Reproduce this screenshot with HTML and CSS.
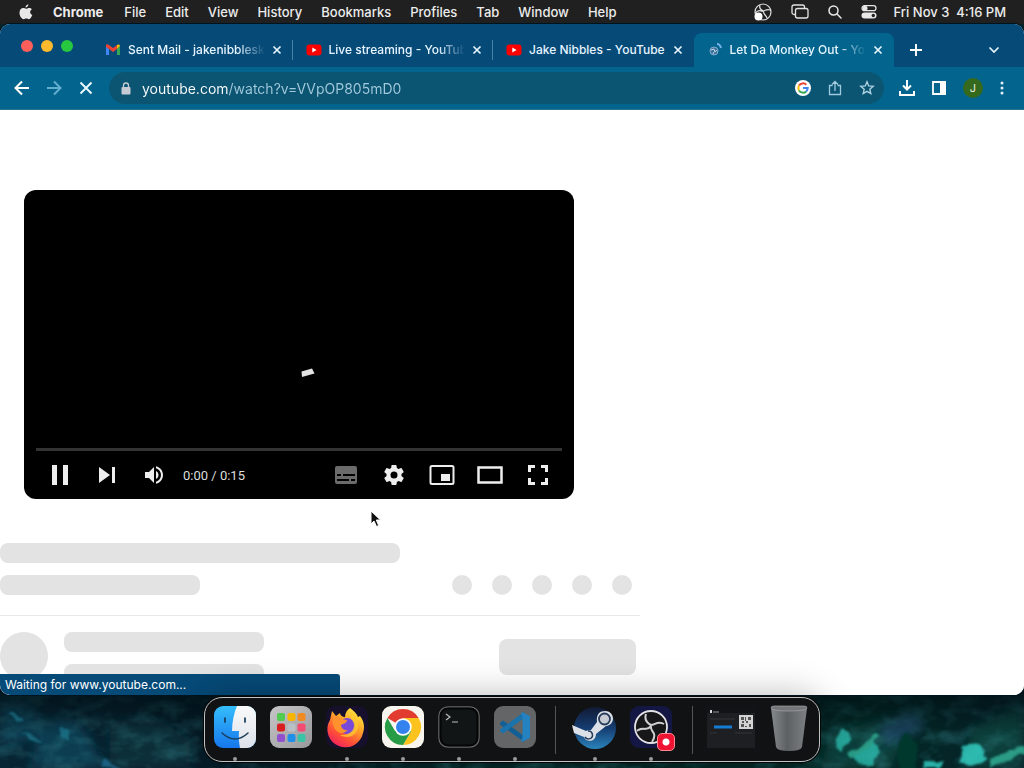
FILE: index.html
```html
<!DOCTYPE html>
<html lang="en">
<head>
<meta charset="utf-8">
<title>Let Da Monkey Out - YouTube</title>
<link rel="stylesheet" href="styles.css">
</head>
<body>
<div class="desktop">
  <svg class="wallpaper" viewBox="0 0 1024 80" preserveAspectRatio="none" aria-hidden="true">
    <defs>
      <linearGradient id="sea" x1="0" x2="1"><stop offset="0" stop-color="#082838"/><stop offset=".2" stop-color="#061f2b"/><stop offset=".5" stop-color="#042a28"/><stop offset=".85" stop-color="#032b26"/><stop offset="1" stop-color="#06242c"/></linearGradient>
      <linearGradient id="deep" x2="0" y2="1"><stop offset="0" stop-color="#000d12" stop-opacity=".8"/><stop offset=".6" stop-color="#000d12" stop-opacity=".1"/></linearGradient>
      <filter id="soft" x="-20%" y="-50%" width="140%" height="200%"><feGaussianBlur stdDeviation="5"/></filter>
      <filter id="coral" x="0" y="0" width="100%" height="100%"><feTurbulence type="fractalNoise" baseFrequency=".045 .07" numOctaves="3" seed="8"/><feColorMatrix values="0 0 0 0 .05  0 0 0 0 .32  0 0 0 0 .36  2.4 0 0 0 -1"/></filter>
      <filter id="rough" x="-10%" y="-30%" width="120%" height="160%"><feTurbulence type="fractalNoise" baseFrequency=".09" numOctaves="2" seed="3"/><feDisplacementMap in="SourceGraphic" scale="8" xChannelSelector="R" yChannelSelector="G"/><feGaussianBlur stdDeviation="1"/></filter>
    </defs>
    <rect width="1024" height="80" fill="url(#sea)"/>
    <g filter="url(#soft)">
      <path d="M0 15q25-8 38 12t-8 25-30 5zM40 40q25-24 45 2l20 38H30z" fill="#0f4358"/>
      <path d="M110 35q50-15 80 20v25h-80z" fill="#0a333c"/>
      <path d="M830 45l55-15 20 22-15 28h-70zM970 40l54-25v65h-60z" fill="#07443f"/>
      <path d="M880 38l35-16 10 18-40 18z" fill="#1b4a65"/>
    </g>
    <rect width="1024" height="80" filter="url(#coral)" opacity=".35"/>
    <rect width="1024" height="80" fill="url(#deep)"/>
    <g filter="url(#rough)">
      <path d="M60 40l12 2-5 10-8-3zM6 26q12-4 18 8M20 46q18-3 23 10" fill="#1f7f95" opacity=".65"/>
      <path d="M104 70l17 10h-20z" fill="#24719b" opacity=".7"/>
      <path d="M840 42q10-2 10 10l-9 12-5-5zM854 65l18-12 8 10-8 15-14-2z" fill="#2dbcae" opacity=".8"/>
      <path d="M848 66l30-20 3 3-29 21zM990 72l34-15v8l-34 14z" fill="#2c9b85"/>
      <path d="M960 58l20-2 7 15-15 7-14-4 4-8zM925 72l18 1-4 7h-16z" fill="#35d4c8" opacity=".8"/>
      <ellipse cx="907" cy="65" rx="10" ry="19" fill="#06372e"/>
    </g>
  </svg>

  <header class="menubar">
    <button class="apple" aria-label="Apple menu"><svg width="14" height="16" viewBox="0 0 14 16" fill="#e8e8e8"><path d="M9.400.3c.1 1.900-1.400 3.300-2.800 3.300C6.400 1.900 7.800.6 9.400.3zM12.900 5.300c-2.600 1.500-2.100 4.700.4 5.700-.6 1.700-2 4.200-3.400 4.200-1.100 0-1.400-.7-2.600-.7s-1.600.7-2.600.7C2.500 15.200.3 11.400.5 8.500c.2-3 2-4.400 3.700-4.400 1.200 0 2 .7 2.900.7s1.700-.8 3.200-.8c1 0 2 .5 2.600 1.300z"/></svg></button>
    <nav class="menus">
      <button class="app-name">Chrome</button><button>File</button><button>Edit</button><button>View</button><button>History</button><button>Bookmarks</button><button>Profiles</button><button>Tab</button><button>Window</button><button>Help</button>
    </nav>
    <div class="status-icons">
      <button aria-label="OBS"><svg width="18" height="18" viewBox="0 0 18 18" fill="none" stroke="#e2e2e2"><circle cx="9" cy="9" r="8" stroke-width="1.200"/><path d="M6 2c-1 3 1 5 3.500 6M9.500 8c2-.5 4-2.500 6.500-1M9.500 8C9 11 12 12 13 15M9 8.500C6 7 3 7.500 1.500 10" stroke-width="1.200"/><circle cx="4.500" cy="13.500" r="4" fill="#fff" stroke="none"/></svg></button>
      <button aria-label="Windows"><svg width="18" height="16" viewBox="0 0 18 16" fill="none" stroke="#e2e2e2" stroke-width="1.300"><path d="M4 10.500H3a2 2 0 0 1-2-2V3a2 2 0 0 1 2-2h8.500a2 2 0 0 1 2 2v1"/><rect x="4.500" y="4.500" width="12.500" height="9.500" rx="2"/></svg></button>
      <button aria-label="Search"><svg width="14" height="14" viewBox="0 0 14 14" fill="none" stroke="#e8e8e8" stroke-width="1.500"><circle cx="5.500" cy="5.500" r="4.500"/><path d="M9 9l4 4" stroke-linecap="round"/></svg></button>
      <button aria-label="Control Center"><svg width="16" height="14" viewBox="0 0 16 14"><rect x="1" y=".7" width="14" height="5" rx="2.500" fill="none" stroke="#e8e8e8" stroke-width="1.200"/><circle cx="4" cy="3.200" r="2.500" fill="#e8e8e8"/><rect x=".5" y="7.500" width="15" height="6" rx="3" fill="#e8e8e8"/><circle cx="12.300" cy="10.500" r="1.700" fill="#222"/></svg></button>
    </div>
    <time class="clock">Fri Nov 3&nbsp; 4:16 PM</time>
  </header>

  <main class="window">
    <div class="tabstrip">
      <div class="lights"><button class="light red" aria-label="Close"></button><button class="light yellow" aria-label="Minimize"></button><button class="light green" aria-label="Zoom"></button></div>
      <div class="tabs">
        <div class="tab">
          <svg class="favicon" viewBox="0 0 16 16"><path d="M1 4v9h3V7z" fill="#4285f4"/><path d="M12 7v6h3V4z" fill="#34a853"/><path d="M1 3.500C1 2 3 2 4 3l4 3 4-3v4l-4 3-4-3-3-2z" fill="#ea4335"/><path d="M12 3c1-1 3-.8 3 1l-3 3z" fill="#fbbc04"/></svg>
          <span class="tab-title fade">Sent Mail - jakenibblesk</span><button class="close" aria-label="Close tab"><svg viewBox="0 0 10 10"><path d="M1.500 1.500l7 7m0-7l-7 7"/></svg></button>
        </div>
        <div class="tab">
          <svg class="favicon" viewBox="0 0 16 16"><rect x=".5" y="2.500" width="15" height="11" rx="3" fill="#f00"/><path d="M6.300 5.500v5l4.300-2.500z" fill="#fff"/></svg>
          <span class="tab-title fade">Live streaming - YouTub</span><button class="close" aria-label="Close tab"><svg viewBox="0 0 10 10"><path d="M1.500 1.500l7 7m0-7l-7 7"/></svg></button>
        </div>
        <div class="tab">
          <svg class="favicon" viewBox="0 0 16 16"><rect x=".5" y="2.500" width="15" height="11" rx="3" fill="#f00"/><path d="M6.300 5.500v5l4.300-2.500z" fill="#fff"/></svg>
          <span class="tab-title">Jake Nibbles - YouTube</span><button class="close" aria-label="Close tab"><svg viewBox="0 0 10 10"><path d="M1.500 1.500l7 7m0-7l-7 7"/></svg></button>
        </div>
        <div class="tab active">
          <svg class="favicon" viewBox="0 0 16 16" fill="none"><circle cx="7" cy="9" r="4" fill="#3b6f9b" stroke="#82add0"/><path d="M4 8l3-1 1 3 2-2M6 12l1-2" stroke="#c5d8e7"/><path d="M10 2q3 0 4 4" stroke="#74b2ed" stroke-width="2"/></svg>
          <span class="tab-title fade">Let Da Monkey Out - Yo</span><button class="close" aria-label="Close tab"><svg viewBox="0 0 10 10"><path d="M1.500 1.500l7 7m0-7l-7 7"/></svg></button>
        </div>
      </div>
      <button class="new-tab" aria-label="New tab"><svg width="14" height="14" viewBox="0 0 14 14"><path d="M7 1v12M1 7h12" stroke="#fff" stroke-width="1.900"/></svg></button>
      <button class="tab-search" aria-label="Search tabs"><svg width="12" height="8" viewBox="0 0 12 8"><path d="M1.500 1.500L6 6l4.500-4.500" fill="none" stroke="#e5f4fb" stroke-width="1.700"/></svg></button>
    </div>

    <div class="toolbar">
      <div class="nav-buttons">
        <button aria-label="Back"><svg width="16" height="16" viewBox="0 0 16 16" stroke="#fff"><path d="M15 8H2M8 1.500L1.500 8 8 14.500"/></svg></button>
        <button aria-label="Forward"><svg width="16" height="16" viewBox="0 0 16 16" stroke="#62add0"><path d="M1 8h13M8 1.500L14.500 8 8 14.500"/></svg></button>
        <button aria-label="Stop"><svg width="16" height="16" viewBox="0 0 16 16" stroke="#e9f7ff"><path d="M2.500 2.500l11 11m0-11l-11 11"/></svg></button>
      </div>
      <div class="omnibox">
        <svg width="10" height="13" viewBox="0 0 10 13"><rect x=".5" y="5" width="9" height="7.500" rx="1" fill="#c6ccd4"/><path d="M2.500 5V3.500a2.500 2.500 0 0 1 5 0V5" fill="none" stroke="#c6ccd4" stroke-width="1.300"/></svg>
        <input class="url" aria-label="Address" value="youtube.com/watch?v=VVpOP805mD0">
        <div class="omni-actions">
          <button aria-label="Search with Google"><svg width="16" height="16" viewBox="0 0 16 16"><circle cx="8" cy="8" r="8" fill="#fff"/><g fill="none" stroke-width="2"><path d="M11.300 4.700A4.700 4.700 0 0 0 4 5.600" stroke="#ea4335"/><path d="M4 5.600a4.700 4.700 0 0 0 0 4.800" stroke="#fbbc05"/><path d="M4 10.400a4.700 4.700 0 0 0 7.200 1" stroke="#34a853"/><path d="M11.200 11.400a4.700 4.700 0 0 0 1.500-3.300H8" stroke="#4285f4"/></g></svg></button>
          <button aria-label="Share"><svg width="14" height="16" viewBox="0 0 14 16" fill="none" stroke="#9fc9dd" stroke-width="1.300"><path d="M4.500 5.500h-3v9h11v-9h-3M7 11V2M4 4.500l3-3 3 3"/></svg></button>
          <button aria-label="Bookmark"><svg width="16" height="16" viewBox="0 0 16 16" fill="none" stroke="#acd0e0" stroke-width="1.400"><path d="M8 1.800l1.700 4.100 4.500.4-3.400 2.900 1 4.400L8 11.300l-3.800 2.300 1-4.400-3.400-2.900 4.500-.4z"/></svg></button>
        </div>
      </div>
      <div class="tools">
        <button aria-label="Downloads"><svg width="16" height="16" viewBox="0 0 16 16" fill="none" stroke="#fff" stroke-width="2"><path d="M8 0v9M4 5.500l4 4 4-4M1 11v4h14v-4"/></svg></button>
        <button aria-label="Side panel"><svg width="14" height="14" viewBox="0 0 14 14"><path d="M1 1h12v12H1z" fill="none" stroke="#fff" stroke-width="1.800"/><path d="M8 0h6v14H8z" fill="#fff"/></svg></button>
        <button class="profile" aria-label="Profile">J</button>
        <button aria-label="More"><svg width="4" height="14" viewBox="0 0 4 14" fill="#e4f2f8"><circle cx="2" cy="2" r="1.500"/><circle cx="2" cy="7" r="1.500"/><circle cx="2" cy="12" r="1.500"/></svg></button>
      </div>
    </div>

    <section class="page">
      <div class="player">
        <div class="screen"><svg class="spinner" width="14" height="10" viewBox="0 0 14 10"><path d="M.5 3.500L11 .5 13.500 5.500 1 9z" fill="#e3e3e3"/></svg></div>
        <div class="progress"></div>
        <div class="controls">
          <button aria-label="Pause"><svg width="24" height="24" viewBox="0 0 24 24"><path d="M4 2h5v20H4zM15 2h5v20h-5z"/></svg></button>
          <button aria-label="Next"><svg width="24" height="24" viewBox="0 0 24 24"><path d="M4 4l11 8-11 8zM17 4h3v16h-3z"/></svg></button>
          <button aria-label="Mute"><svg width="24" height="24" viewBox="0 0 24 24"><path d="M3 9v6h4l5 5V4L7 9zM16.500 12c0-1.800-1-3.300-2.500-4v8c1.500-.7 2.500-2.200 2.500-4zM14 3.200v2.100c2.900.9 5 3.500 5 6.700s-2.100 5.800-5 6.700v2.100c4-.9 7-4.500 7-8.800s-3-7.900-7-8.800z"/></svg></button>
          <span class="time">0:00 / 0:15</span>
          <div class="right-controls">
            <button class="dim" aria-label="Subtitles"><svg width="24" height="24" viewBox="0 0 24 24"><path fill-rule="evenodd" d="M3 3h18q2 0 2 2v14q0 2-2 2H3q-2 0-2-2V5q0-2 2-2zM3 11v2h4v-2zM9 11v2h12v-2zM3 16v2h12v-2zM17 16v2h4v-2z"/></svg></button>
            <button aria-label="Settings"><svg width="24" height="24" viewBox="0 0 24 24"><path d="M19.430 12.980c.04-.32.070-.640.070-.980s-.03-.66-.07-.98l2.110-1.650c.19-.15.240-.42.120-.64l-2-3.460c-.12-.22-.39-.3-.61-.22l-2.490 1c-.52-.4-1.080-.73-1.690-.98l-.38-2.650A.49.490 0 0 0 14 2h-4c-.25 0-.46.180-.49.420l-.38 2.650c-.61.250-1.170.590-1.690.98l-2.490-1c-.23-.09-.49 0-.61.220l-2 3.460c-.13.220-.07.490.120.640l2.110 1.650c-.04.320-.07.650-.07.980s.03.660.070.980l-2.110 1.650c-.19.150-.24.420-.12.640l2 3.460c.12.220.39.300.61.220l2.490-1c.52.400 1.080.730 1.690.98l.38 2.650c.03.240.240.420.490.420h4c.25 0 .46-.18.490-.42l.38-2.650c.61-.25 1.170-.59 1.690-.98l2.490 1c.23.090.490 0 .61-.22l2-3.460c.12-.22.070-.49-.12-.64zM12 15.500a3.500 3.500 0 1 1 0-7 3.500 3.500 0 0 1 0 7z"/></svg></button>
            <button aria-label="Miniplayer"><svg width="26" height="24" viewBox="0 0 26 24"><rect x="1.500" y="3" width="23" height="18" rx="1.500" fill="none" stroke="#eee" stroke-width="2"/><path d="M12 11h9v7h-9z"/></svg></button>
            <button aria-label="Theater mode"><svg width="26" height="24" viewBox="0 0 26 24"><path d="M1.500 4.500h23v15h-23z" fill="none" stroke="#eee" stroke-width="2.500"/></svg></button>
            <button aria-label="Full screen"><svg width="24" height="24" viewBox="0 0 24 24"><path d="M9 3.500H3.500V9M15 3.500h5.500V9M9 20.500H3.500V15M15 20.500h5.500V15" fill="none" stroke="#eee" stroke-width="3"/></svg></button>
          </div>
        </div>
      </div>
      <div class="skeleton">
        <div class="bone title"></div>
        <div class="meta"><div class="bone short"></div><div class="dots"><i></i><i></i><i></i><i></i><i></i></div></div>
        <div class="owner"><div class="avatar"></div><div class="lines"><div class="bone short"></div><div class="bone short"></div></div><div class="subscribe"></div></div>
      </div>
      <svg class="cursor" width="12" height="18" viewBox="0 0 12 18"><path d="M1 1v13l3-3 2.500 5.500 2.200-1L6.300 10h4.200z" fill="#111" stroke="#fff"/></svg>
      <div class="loading">Waiting for www.youtube.com...</div>
    </section>
  </main>

  <footer class="dock-area">
    <nav class="dock">
      <button class="app running" aria-label="Finder"><svg viewBox="0 0 42 42"><defs><linearGradient id="fb" x2="0" y2="1"><stop stop-color="#35bdfb"/><stop offset="1" stop-color="#1677ec"/></linearGradient><linearGradient id="fw" x2="0" y2="1"><stop stop-color="#fafafa"/><stop offset="1" stop-color="#dce1ea"/></linearGradient></defs><rect width="42" height="42" rx="9" fill="url(#fb)"/><path d="M23 0h10a9 9 0 0 1 9 9v24a9 9 0 0 1-9 9h-7c-1-5-1.500-11-1-17h-7c0-9 2-18 5-25z" fill="url(#fw)"/><path d="M11 12v4M31 12v4" stroke="#183956" stroke-width="1.700" stroke-linecap="round"/><path d="M8 27q13 12 26 0" fill="none" stroke="#1c3f5e" stroke-width="1.500" stroke-linecap="round"/></svg></button>
      <button class="app" aria-label="Launchpad"><svg viewBox="0 0 42 42"><defs><linearGradient id="lp" x2="1" y2="1"><stop stop-color="#c6c6c8"/><stop offset="1" stop-color="#989799"/></linearGradient></defs><rect width="42" height="42" rx="9" fill="url(#lp)"/><rect x="7" y="7" width="8" height="8" rx="2" fill="#52cc50"/><rect x="17.500" y="7" width="8" height="8" rx="2" fill="#f7b500"/><rect x="27.500" y="7" width="8" height="8" rx="2" fill="#f08a22"/><rect x="7" y="17.500" width="8" height="8" rx="2" fill="#d92020"/><rect x="17.500" y="17.500" width="8" height="8" rx="2" fill="#b9c0c5"/><rect x="27.500" y="17.500" width="8" height="8" rx="2" fill="#f34b72"/><rect x="7" y="28" width="8" height="8" rx="2" fill="#9250cc"/><rect x="17.500" y="28" width="8" height="8" rx="2" fill="#208fe8"/><rect x="27.500" y="28" width="8" height="8" rx="2" fill="#38c4a5"/></svg></button>
      <button class="app running" aria-label="Firefox"><svg viewBox="0 0 42 42"><defs><linearGradient id="ff" x1=".8" y1="0" x2=".2" y2="1"><stop stop-color="#fff044"/><stop offset=".35" stop-color="#ffa928"/><stop offset=".7" stop-color="#ff5037"/><stop offset="1" stop-color="#ed1c62"/></linearGradient></defs><rect width="42" height="42" rx="9" fill="#17102c"/><path d="M24 2c4 3 7 6 8 9l2-1c4 5 5 11 3 17A18 18 0 1 1 4 14l2-9 4 5 4-3c0 2 2 4 5 4 0-4 2-7 5-9z" fill="url(#ff)"/><circle cx="21" cy="20" r="8" fill="#7949d8"/><path d="M7 11c5-2 8 0 9 2l5 1c0 3-4 4-6 5 0 3 3 6 7 5-7 7-17 1-15-13z" fill="#ff922c"/><path d="M26 5c2 6 6 8 6 15 0 9-10 14-18 9 12 1 18-9 11-16z" fill="#ffcb30" opacity=".75"/></svg></button>
      <button class="app running" aria-label="Chrome"><svg viewBox="0 0 42 42"><rect width="42" height="42" rx="9" fill="#f7f5ed"/><path d="M21 21L5.400 12A18 18 0 0 1 36.600 12z" fill="#e23b2f"/><path d="M21 21V12h15.600A18 18 0 0 1 21 39l8-13.500z" fill="#fcc31e"/><path d="M21 21l8 4.500L21 39A18 18 0 0 1 5.400 12L13 25z" fill="#279b46"/><circle cx="21" cy="21" r="8.700" fill="#fff"/><circle cx="21" cy="21" r="7" fill="#3482ee"/></svg></button>
      <button class="app running" aria-label="Terminal"><svg viewBox="0 0 42 42"><rect x="1" y="1" width="40" height="40" rx="9" fill="#111516" stroke="#666" stroke-width="1.500"/><rect x="2.500" y="2.500" width="37" height="37" rx="7.500" fill="none" stroke="#050606" stroke-width="2"/><path d="M8 8l4 3-4 3M14 16h6" fill="none" stroke="#bbb" stroke-width="1.200"/></svg></button>
      <button class="app running" aria-label="Visual Studio Code"><svg viewBox="0 0 42 42"><rect width="42" height="42" rx="9" fill="#646567"/><path d="M6 17l3-2.500L30 30v6L6 18.500z" fill="#125f96"/><path d="M6 25l3 2.500L30 12V6L6 23.500z" fill="#1a73ac"/><path d="M28 6l8 4v22l-8 4-1-2 1.500-2V10L27 8z" fill="#2382bf"/></svg></button>
      <hr class="divider wide">
      <button class="app running" aria-label="Steam"><svg viewBox="0 0 42 42"><defs><linearGradient id="st" x2="0" y2="1"><stop stop-color="#111a35"/><stop offset=".5" stop-color="#153c70"/><stop offset="1" stop-color="#2a83bb"/></linearGradient></defs><circle cx="21" cy="22" r="21" fill="url(#st)"/><path d="M-2 19l14 6q2-1 5-1l6-8c-1-8 3-11 8-11 10 0 11 14 1 15l-10 8c0 8-10 9-12 3L0 27z" fill="#dce1e7"/><circle cx="30.500" cy="13" r="5.500" fill="#c6cbd4" stroke="#273b59" stroke-width="1.800"/><path d="M14 25a4 4 0 1 1-3 6" fill="none" stroke="#273b59" stroke-width="1.500"/></svg></button>
      <button class="app running" aria-label="OBS Studio"><svg viewBox="0 0 42 42"><rect width="42" height="42" rx="9" fill="#141743"/><circle cx="21" cy="21" r="16" fill="#171719" stroke="#e2e2e4" stroke-width="1.800"/><path d="M16 8c-2 6 1 9 5 11 4 0 7-5 13-1M21 19c-1 5 2 6 3 9 1 3 0 5-2 8M21 20c-4 6-9 0-14 5" fill="none" stroke="#d0d0d2" stroke-width="2"/></svg><span class="record"></span></button>
      <hr class="divider">
      <button class="thumb" aria-label="Minimized window"><svg width="48" height="42" viewBox="0 0 48 42"><rect width="48" height="42" fill="#1d1f23"/><rect width="48" height="7" fill="#111317"/><path d="M3 4h2v3H3z" fill="#ddd"/><path d="M6 6h6" stroke="#999"/><path d="M3 13h25M3 27h7M28 27h17" stroke="#34373b"/><path d="M7 21h18" stroke="#167dd4" stroke-width="3"/><rect x="32" y="9" width="14" height="14" fill="#d3d3d3"/><path d="M34 11h3v3h-3zM41 11h3v3h-3zM34 18h3v3h-3zM39 15h2v2h-2zM42 18h2v3h-2zM38 20h2v1h-2zM35 15h2v2h-2zM38 11h1v4h-1z" fill="#555"/></svg></button>
      <button class="trash" aria-label="Trash"><svg width="38" height="48" viewBox="0 0 38 48"><defs><linearGradient id="tr"><stop stop-color="#85898b"/><stop offset=".45" stop-color="#5d6164"/><stop offset="1" stop-color="#7c8082"/></linearGradient></defs><path d="M1 4h36l-5 39q-1 4-13 4T6 43z" fill="url(#tr)"/><path d="M1 4q0-2 3-2h30q3 0 3 2-1 3-18 3T1 4z" fill="#737779" stroke="#a0a3a5" stroke-width=".7"/></svg></button>
    </nav>
  </footer>
</div>
</body>
</html>
```

FILE: styles.css
```css
* { box-sizing: border-box; }
body { margin: 0; font-family: Inter, "Liberation Sans", sans-serif; }
button { margin: 0; padding: 0; border: 0; background: none; color: inherit; font: inherit; display: flex; align-items: center; justify-content: center; }
svg { display: block; flex: none; }

.desktop { position: relative; height: 100vh; display: flex; flex-direction: column; overflow: hidden; background: #04232b; }
.wallpaper { position: absolute; left: 0; bottom: 0; width: 100%; height: 80px; }

.menubar { position: relative; flex: none; height: 24px; display: flex; align-items: center; padding: 0 18px 1px 19px; background: #202020; color: #ececec; font-size: 13px; font-weight: 500; white-space: nowrap; }
.apple { margin-right: 20px; }
.menus { display: flex; gap: 19px; }
.app-name { margin-right: 2px; font-weight: 700; }
.status-icons { display: flex; align-items: center; gap: 19px; margin-left: auto; }
.clock { margin-left: 17px; }

.window { position: relative; flex: 1; min-height: 0; display: flex; flex-direction: column; overflow: hidden; border-radius: 10px; background: #fff; box-shadow: 0 0 0 1px #00141f; }
.tabstrip { flex: none; height: 43px; display: flex; align-items: flex-end; padding-right: 14px; background: #064a78; color: #e6f5ff; }
.lights { display: flex; gap: 8px; height: 43px; width: 92px; padding: 16px 0 0 21px; flex: none; }
.light { width: 12px; height: 12px; border-radius: 50%; }
.red { background: #ff5f5b; }
.yellow { background: #fcba2c; }
.green { background: #27c83f; }
.tabs { display: flex; flex: 0 1 802px; min-width: 0; }
.tab { position: relative; flex: 1; min-width: 0; height: 34px; display: flex; align-items: center; padding: 0 8px 1px 13px; font-size: 12px; font-weight: 500; }
.tab:not(.active)::after { content: ""; position: absolute; right: 0; top: 7px; height: 20px; width: 1px; background: #4782a5; }
.tab:nth-child(3)::after { display: none; }
.tab.active { background: #03658e; border-radius: 8px 8px 0 0; }
.favicon { width: 16px; height: 16px; margin-right: 7px; }
.tab-title { flex: 1; min-width: 0; overflow: hidden; white-space: nowrap; }
.fade { -webkit-mask-image: linear-gradient(to right, #000 80%, transparent); mask-image: linear-gradient(to right, #000 80%, transparent); }
.close { width: 16px; height: 16px; margin-left: 4px; flex: none; }
.close svg { width: 10px; height: 10px; fill: none; stroke: #e6f5ff; stroke-width: 1.7; }
.new-tab { width: 28px; height: 34px; margin-left: 8px; }
.tab-search { width: 32px; height: 34px; margin-left: auto; }

.toolbar { flex: none; height: 43px; display: flex; align-items: center; gap: 15px; padding: 0 20px 0 14px; background: #03658e; border-bottom: 1px solid #257590; }
.nav-buttons { display: flex; gap: 16px; }
.nav-buttons svg { fill: none; stroke-width: 2; }
.omnibox { flex: 1; min-width: 0; height: 32px; display: flex; align-items: center; padding: 0 9px 0 12px; border-radius: 16px; background: #0b5573; }
.url { flex: 1; min-width: 0; height: 24px; margin-left: 11px; padding: 0; border: 0; outline: 0; font: 14px Inter, "Liberation Sans", sans-serif; color: #acd0e0; background: linear-gradient(to right, #fff 87px, #a3cadc 87px); -webkit-background-clip: text; background-clip: text; -webkit-text-fill-color: transparent; }
.omni-actions { display: flex; align-items: center; gap: 17px; }
.tools { display: flex; align-items: center; gap: 17px; }
.profile { width: 20px; height: 20px; border-radius: 50%; background: #35691e; color: #e4eddf; font-size: 11px; }

.page { position: relative; flex: 1; min-height: 0; overflow: hidden; padding-top: 80px; background: #fff; }
.player { width: 550px; max-width: calc(100% - 48px); margin: 0 24px; padding: 0 12px; border-radius: 12px; background: #000; color: #ddd; }
.screen { position: relative; height: 258px; }
.spinner { position: absolute; left: 265px; top: 178px; }
.progress { height: 3px; background: #333; }
.controls { height: 48px; display: flex; align-items: center; }
.controls button { width: 47px; height: 48px; }
.controls svg { fill: #eee; }
.time { margin-left: 6px; font: 13px Roboto, sans-serif; }
.right-controls { display: flex; margin-left: auto; }
.right-controls button { width: 48px; }
.right-controls .dim { opacity: .45; }

.skeleton { max-width: 640px; padding-top: 44px; }
.bone { height: 20px; border-radius: 8px; background: #e3e3e3; }
.title { width: 400px; }
.short { width: 200px; }
.meta { display: flex; justify-content: space-between; padding: 12px 8px 20px 0; border-bottom: 1px solid #e8e8e8; }
.dots { display: flex; gap: 20px; }
.dots i { width: 20px; height: 20px; border-radius: 50%; background: #e3e3e3; }
.owner { display: flex; padding: 16px 4px 0 0; }
.avatar { width: 48px; height: 48px; border-radius: 50%; background: #e3e3e3; }
.lines { display: flex; flex-direction: column; gap: 12px; margin-left: 16px; }
.subscribe { width: 137px; height: 36px; margin: 7px 0 0 auto; border-radius: 8px; background: #e3e3e3; }
.cursor { position: absolute; left: 370px; top: 400px; }
.loading { position: absolute; left: 0; bottom: 0; width: 33.2%; height: 21px; padding-left: 5px; border-radius: 0 3px 0 0; background: #064a78; color: #fff; font-size: 12px; line-height: 21px; white-space: nowrap; }

.dock-area { position: relative; flex: none; height: 73px; display: flex; justify-content: center; align-items: flex-start; padding-top: 2px; }
.dock { display: flex; gap: 14px; height: 65px; padding: 8px 11px 0 9px; border: 1px solid #bfc4c5; border-radius: 18px; background: #111213; box-shadow: 0 0 0 1px #050505, 0 0 36px rgba(0, 0, 0, .3); }
.app { position: relative; width: 42px; height: 42px; }
.app > svg { width: 42px; height: 42px; overflow: visible; }
.running::after { content: ""; position: absolute; left: 19px; top: 51px; width: 4px; height: 4px; border-radius: 50%; background: #9a9a9a; }
.divider { width: 1px; height: 48px; margin: 0 0 0 6px; border: 0; background: #555; }
.divider.wide { margin: 0 4px 0 5px; }
.record { position: absolute; right: -3px; bottom: -3px; width: 18px; height: 18px; border: 1px solid #ff8b91; border-radius: 5px; background: radial-gradient(circle, #fff 3px, #ef1434 4px); }
.thumb { width: 48px; height: 42px; }
.trash { width: 39px; height: 44px; }
```
